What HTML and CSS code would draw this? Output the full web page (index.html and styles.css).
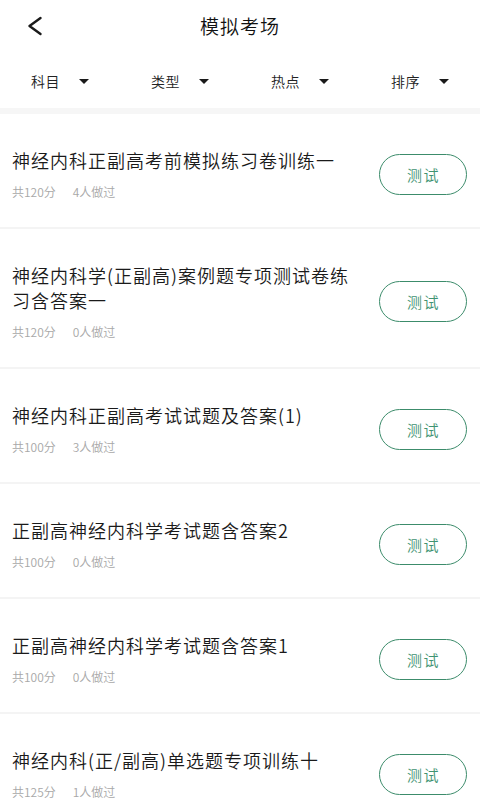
FILE: index.html
```html
<!DOCTYPE html>
<html lang="zh-CN">
<head>
<meta charset="utf-8">
<title>模拟考场</title>
<link rel="stylesheet" href="styles.css">
</head>
<body>
<div class="page">
  <header class="topbar">
    <div class="back">
      <svg width="16" height="20" viewBox="0 0 16 20"><polyline points="13.5,2 2.5,10 13.5,18" fill="none" stroke="#1a1a1a" stroke-width="2.4" stroke-linecap="round" stroke-linejoin="round"/></svg>
    </div>
    <h1 class="title">模拟考场</h1>
    <div></div>
  </header>
  <nav class="filters">
    <div class="filter"><span>科目</span><i class="caret"></i></div>
    <div class="filter"><span>类型</span><i class="caret"></i></div>
    <div class="filter"><span>热点</span><i class="caret"></i></div>
    <div class="filter"><span>排序</span><i class="caret"></i></div>
  </nav>
  <div class="band"></div>
  <ul class="list">
    <li class="item">
      <div class="info">
        <div class="name">神经内科正副高考前模拟练习卷训练一</div>
        <div class="meta"><span>共120分</span><span>4人做过</span></div>
      </div>
      <div class="btn">测试</div>
    </li>
    <li class="item">
      <div class="info">
        <div class="name">神经内科学(正副高)案例题专项测试卷练习含答案一</div>
        <div class="meta"><span>共120分</span><span>0人做过</span></div>
      </div>
      <div class="btn">测试</div>
    </li>
    <li class="item">
      <div class="info">
        <div class="name">神经内科正副高考试试题及答案(1)</div>
        <div class="meta"><span>共100分</span><span>3人做过</span></div>
      </div>
      <div class="btn">测试</div>
    </li>
    <li class="item">
      <div class="info">
        <div class="name">正副高神经内科学考试题含答案2</div>
        <div class="meta"><span>共100分</span><span>0人做过</span></div>
      </div>
      <div class="btn">测试</div>
    </li>
    <li class="item">
      <div class="info">
        <div class="name">正副高神经内科学考试题含答案1</div>
        <div class="meta"><span>共100分</span><span>0人做过</span></div>
      </div>
      <div class="btn">测试</div>
    </li>
    <li class="item">
      <div class="info">
        <div class="name">神经内科(正/副高)单选题专项训练十</div>
        <div class="meta"><span>共125分</span><span>1人做过</span></div>
      </div>
      <div class="btn">测试</div>
    </li>
  </ul>
</div>
</body>
</html>
```

FILE: styles.css
```css
* { box-sizing: border-box; }
html, body {
  margin: 0;
  padding: 0;
  background: #ffffff;
}
body {
  font-family: "Noto Sans CJK SC", "Noto Sans", sans-serif;
  font-weight: 350;
  color: #1a1a1a;
  width: 480px;
  height: 800px;
  overflow: hidden;
}
.topbar {
  height: 52px;
  display: grid;
  grid-template-columns: 1fr auto 1fr;
  align-items: center;
}
.back {
  padding-left: 27px;
  display: flex;
  align-items: center;
  height: 52px;
}
.back svg { display: block; }
.title {
  margin: 0;
  font-size: 19px;
  font-weight: 350;
  letter-spacing: 1px;
  color: #111111;
  line-height: 52px;
}
.filters {
  height: 56px;
  display: grid;
  grid-template-columns: repeat(4, 1fr);
  align-items: center;
}
.filter {
  display: flex;
  align-items: center;
  justify-content: center;
  gap: 19px;
  font-size: 14px;
  letter-spacing: 0.6px;
  color: #222222;
  padding-top: 2px;
}
.caret {
  width: 0;
  height: 0;
  border-left: 5.5px solid transparent;
  border-right: 5.5px solid transparent;
  border-top: 5.5px solid #1a1a1a;
}
.band {
  height: 6px;
  background: #f6f6f6;
}
.list {
  list-style: none;
  margin: 0;
  padding: 0;
}
.item {
  display: flex;
  align-items: center;
  padding: 34px 13px 27px 12px;
  border-bottom: 2px solid #f4f4f4;
}
.info {
  flex: 1;
  min-width: 0;
  padding-right: 24px;
}
.name {
  font-size: 18px;
  letter-spacing: 1px;
  line-height: 25px;
  color: #1a1a1a;
}
.meta {
  margin-top: 11px;
  font-size: 12px;
  line-height: 16px;
  color: #a8a8a8;
  display: flex;
  gap: 17px;
}
.btn {
  flex: none;
  width: 88px;
  height: 41px;
  border: 1.5px solid #3c8c6b;
  border-radius: 21px;
  display: flex;
  align-items: center;
  justify-content: center;
  font-size: 15px;
  letter-spacing: 1.5px;
  color: #3f9372;
  padding-left: 1px;
}
```
